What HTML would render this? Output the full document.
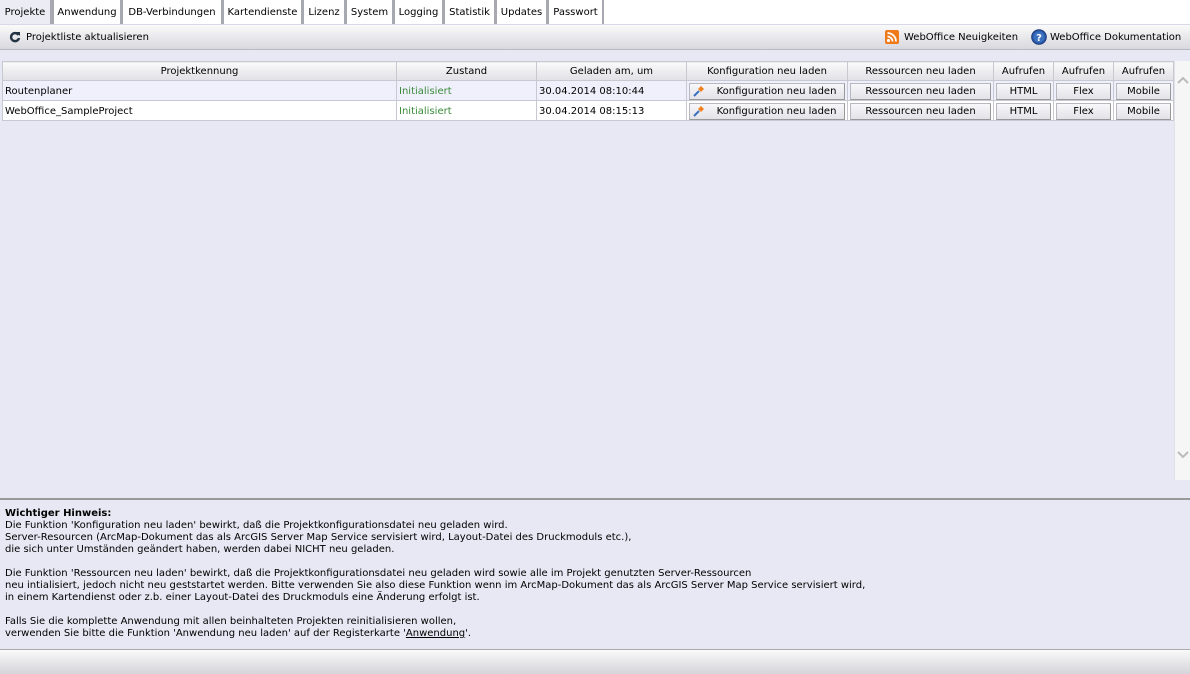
<!DOCTYPE html>
<html><head><meta charset="utf-8"><style>
*{margin:0;padding:0;box-sizing:border-box}
body{width:1190px;height:674px;position:relative;overflow:hidden;background:#e8e8f4;font-family:"DejaVu Sans",Verdana,sans-serif;font-size:10px;color:#000}
.a{position:absolute}
.tab{position:absolute;top:0;height:24px;background:#fff;border-left:2px solid #a8a8b0;border-right:2px solid #a8a8b0;line-height:25px;text-align:center;white-space:nowrap}
#tabs{position:absolute;left:0;top:0;width:1190px;height:25px;background:#fff;border-bottom:1px solid #d8d8e8}
#tb{position:absolute;left:0;top:25px;width:1190px;height:25px;background:linear-gradient(#fafafa,#d8d8de);border-bottom:1px solid #b8b8c4}
table{position:absolute;left:2px;top:61px;border-collapse:collapse;table-layout:fixed;width:1171px}
td,th{border:1px solid #c8c8d0;white-space:nowrap;overflow:hidden;height:20px;font-weight:normal}
th{background:linear-gradient(#fafafa,#e0e0e6);height:19px;text-align:center}
tr.r1 td{background:#f0f0fc}
tr.r2 td{background:#fff}
td{padding:1px 2px 0}
.g{color:#3a8a3a}
.btn{display:block;height:17px;border:1px solid #b8b8c0;background:linear-gradient(#f8f8fa,#e2e2e8);text-align:center;line-height:16px;border-right-color:#999;border-bottom-color:#999}
#sb{position:absolute;left:1174px;top:61px;width:16px;height:419px;background:#f6f6f6;border-left:1px solid #e0e0e8}
#note{position:absolute;left:0;top:498px;width:1190px;height:152px;border-top:2px solid #999;padding:8px 5px;line-height:12px}
#foot{position:absolute;left:0;top:649px;width:1190px;height:25px;border-top:1px solid #aaa;background:linear-gradient(#fafafa,#d4d4da)}
</style></head><body>
<div id="tabs">
<div class="tab" style="left:0;width:52px;background:#ececf4;border-left:0">Projekte</div>
<div class="tab" style="left:52px;width:70px">Anwendung</div>
<div class="tab" style="left:121px;width:102px">DB-Verbindungen</div>
<div class="tab" style="left:222px;width:81px">Kartendienste</div>
<div class="tab" style="left:302px;width:44px">Lizenz</div>
<div class="tab" style="left:345px;width:49px">System</div>
<div class="tab" style="left:393px;width:51px">Logging</div>
<div class="tab" style="left:443px;width:53px">Statistik</div>
<div class="tab" style="left:495px;width:53px">Updates</div>
<div class="tab" style="left:547px;width:57px">Passwort</div>
</div>
<div id="tb">
<svg class="a" style="left:9px;top:6px" width="12" height="12" viewBox="0 0 12 12"><path d="M9.5 4A4 4 0 1 0 10 7" fill="none" stroke="#234" stroke-width="2.4"/><path d="M7 1L11 1L11 5Z" fill="#234"/></svg>
<div class="a" style="left:26px;top:7px">Projektliste aktualisieren</div>
<svg class="a" style="left:885px;top:5px" width="14" height="14" viewBox="0 0 14 14"><rect width="14" height="14" rx="2" fill="#f07a1a"/><circle cx="3.5" cy="10.5" r="1.6" fill="#fff"/><path d="M2.5 6.5a5 5 0 0 1 5 5M2.5 3a8.5 8.5 0 0 1 8.5 8.5" fill="none" stroke="#fff" stroke-width="1.7"/></svg>
<div class="a" style="left:904px;top:7px">WebOffice Neuigkeiten</div>
<svg class="a" style="left:1031px;top:4px" width="16" height="16" viewBox="0 0 16 16"><circle cx="8" cy="8" r="7.3" fill="#2a5aa8" stroke="#1a3a7a"/><circle cx="8" cy="8" r="5.5" fill="#3a70c0"/><text x="8" y="12" font-size="10" font-weight="bold" fill="#fff" text-anchor="middle" font-family="DejaVu Sans">?</text></svg>
<div class="a" style="left:1050px;top:7px">WebOffice Dokumentation</div>
</div>
<table>
<colgroup><col style="width:394px"><col style="width:140px"><col style="width:150px"><col style="width:161px"><col style="width:146px"><col style="width:60px"><col style="width:60px"><col style="width:60px"></colgroup>
<tr><th>Projektkennung</th><th>Zustand</th><th>Geladen am, um</th><th>Konfiguration neu laden</th><th>Ressourcen neu laden</th><th>Aufrufen</th><th>Aufrufen</th><th>Aufrufen</th></tr>
<tr class="r1"><td>Routenplaner</td><td class="g">Initialisiert</td><td>30.04.2014 08:10:44</td><td><span class="btn"><svg width="12" height="12" viewBox="0 0 12 12" style="float:left;margin-top:1px;margin-left:3px;margin-right:4px"><path d="M1 11L6 6" stroke="#3a70c0" stroke-width="2"/><path d="M5 4l3-3 3 3-3 3z" fill="#f08020"/></svg>Konfiguration neu laden</span></td><td><span class="btn">Ressourcen neu laden</span></td><td><span class="btn">HTML</span></td><td><span class="btn">Flex</span></td><td><span class="btn">Mobile</span></td></tr>
<tr class="r2"><td>WebOffice_SampleProject</td><td class="g">Initialisiert</td><td>30.04.2014 08:15:13</td><td><span class="btn"><svg width="12" height="12" viewBox="0 0 12 12" style="float:left;margin-top:1px;margin-left:3px;margin-right:4px"><path d="M1 11L6 6" stroke="#3a70c0" stroke-width="2"/><path d="M5 4l3-3 3 3-3 3z" fill="#f08020"/></svg>Konfiguration neu laden</span></td><td><span class="btn">Ressourcen neu laden</span></td><td><span class="btn">HTML</span></td><td><span class="btn">Flex</span></td><td><span class="btn">Mobile</span></td></tr>
</table>
<div id="sb"><svg class="a" style="left:2px;top:15px" width="12" height="8"><path d="M1 7L6 2L11 7" fill="none" stroke="#bbb" stroke-width="2"/></svg><svg class="a" style="left:2px;top:390px" width="12" height="8"><path d="M1 1L6 6L11 1" fill="none" stroke="#bbb" stroke-width="2"/></svg></div>
<div id="note">
<b>Wichtiger Hinweis:</b><br>
Die Funktion 'Konfiguration neu laden' bewirkt, daß die Projektkonfigurationsdatei neu geladen wird.<br>
Server-Resourcen (ArcMap-Dokument das als ArcGIS Server Map Service servisiert wird, Layout-Datei des Druckmoduls etc.),<br>
die sich unter Umständen geändert haben, werden dabei NICHT neu geladen.<br><br>
Die Funktion 'Ressourcen neu laden' bewirkt, daß die Projektkonfigurationsdatei neu geladen wird sowie alle im Projekt genutzten Server-Ressourcen<br>
neu intialisiert, jedoch nicht neu geststartet werden. Bitte verwenden Sie also diese Funktion wenn im ArcMap-Dokument das als ArcGIS Server Map Service servisiert wird,<br>
in einem Kartendienst oder z.b. einer Layout-Datei des Druckmoduls eine Änderung erfolgt ist.<br><br>
Falls Sie die komplette Anwendung mit allen beinhalteten Projekten reinitialisieren wollen,<br>
verwenden Sie bitte die Funktion 'Anwendung neu laden' auf der Registerkarte '<u>Anwendung</u>'.
</div>
<div id="foot"></div>
</body></html>
